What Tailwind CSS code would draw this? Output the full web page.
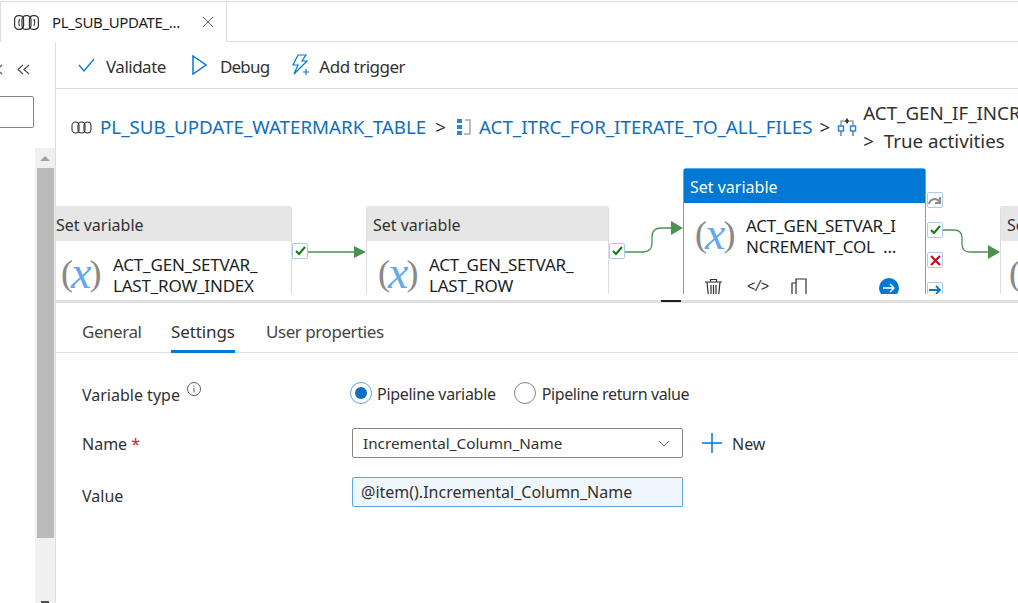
<!DOCTYPE html>
<html lang="en">
<head>
<meta charset="UTF-8">
<title>Pipeline editor</title>
<script src="https://cdn.jsdelivr.net/npm/@tailwindcss/browser@4"></script>
</head>
<body class="bg-white">
<div class="w-[1018px] h-[603px] overflow-hidden flex flex-col bg-white text-[#323130] font-['Noto_Sans',sans-serif]">

  <!-- tab strip -->
  <div class="h-[42px] shrink-0 flex pt-px">
    <div class="w-[227px] h-[41px] border-t border-l border-r border-[#ddd] flex items-center pl-[13px] text-[15px] text-[#201f1e]">
      <svg width="25" height="15" viewBox="0 0 25 15" fill="none" stroke="#323130" stroke-width="1.200"><rect x="0.600" y="0.600" width="9" height="13.800" rx="4"/><rect x="8" y="0.600" width="9" height="13.800" rx="4"/><rect x="15.400" y="0.600" width="9" height="13.800" rx="4"/><path d="M5.500 4q-1.500 3.500 0 7M20 4q1.500 3.500 0 7"/></svg>
      <span class="ml-[13px] w-[141px] whitespace-nowrap tracking-[-0.35px]">PL_SUB_UPDATE_...</span>
      <svg class="ml-[9px]" width="12" height="12" viewBox="0 0 12 12" stroke="#605e5c" stroke-width="1"><path d="M1 1l10 10M11 1L1 11"/></svg>
    </div>
    <div class="flex-1 border-t border-b border-[#ddd]"></div>
  </div>

  <div class="flex-1 flex min-h-0">
    <!-- collapsed factory panel -->
    <div class="w-[56px] shrink-0 border-r border-[#ddd] flex flex-col">
      <div class="h-[54px] pt-[22px] flex">
        <svg class="-ml-[4px]" width="8" height="11" viewBox="0 0 8 11" fill="none" stroke="#505050" stroke-width="1.200"><path d="M6 1L1 5.500 6 10"/></svg>
        <svg class="ml-[13px]" width="13" height="11" viewBox="0 0 13 11" fill="none" stroke="#505050" stroke-width="1.200"><path d="M6 1L1 5.500 6 10M12 1L7 5.500l5 4.500"/></svg>
      </div>
      <div class="w-[34px] h-[32px] border border-l-0 border-[#8a8a8a] rounded-r-[2px]"></div>
      <div class="mt-[20px] ml-[35px] w-[20px] flex-1 bg-[#f0f0f0] flex flex-col items-center">
        <div class="h-[20px] flex items-center"><div class="w-0 h-0 border-x-[5px] border-x-transparent border-b-[5px] border-b-[#a3a3a3]"></div></div>
        <div class="w-[17px] h-[370px] bg-[#bababa]"></div>
        <div class="flex-1"></div>
        <div class="w-[8px] h-[2px] bg-[#505050]"></div>
      </div>
    </div>

    <div class="flex-1 min-w-0 flex flex-col">
      <!-- command bar -->
      <div class="h-[47px] shrink-0 border-b border-[#ddd] flex items-center pl-[22px] text-[17px] leading-none tracking-[-0.5px]">
        <svg width="17" height="14" viewBox="0 0 17 14" fill="none" stroke="#0078d4" stroke-width="1.300"><path d="M1 7l5 6L16 1"/></svg>
        <span class="ml-[11px] pt-[3px]">Validate</span>
        <svg class="ml-[26px]" width="15" height="20" viewBox="0 0 15 20" fill="none" stroke="#0078d4" stroke-width="1.500"><path d="M1 1l13 9-13 9z"/></svg>
        <span class="ml-[13px] pt-[3px] tracking-[-0.8px]">Debug</span>
        <svg class="ml-[22px]" width="19" height="22" viewBox="0 0 19 22" fill="none" stroke="#0078d4" stroke-width="1.200"><path d="M7 1h8l-4 6h5L3 20l4-9H2z"/><path d="M15 15v6M12 18h6"/></svg>
        <span class="ml-[9px] pt-[3px]">Add trigger</span>
      </div>

      <!-- breadcrumb -->
      <div class="h-[76px] shrink-0 flex pl-[15px] pt-[12px] text-[18.75px] leading-[26px] whitespace-nowrap">
        <div class="h-[52px] flex items-center">
          <svg width="21" height="13" viewBox="0 0 21 13" fill="none" stroke="#323130" stroke-width="1.100"><rect x="1" y="1" width="7" height="11" rx="3.500"/><rect x="7" y="1" width="7" height="11" rx="3.500"/><rect x="13" y="1" width="7" height="11" rx="3.500"/></svg>
          <span class="ml-[8px] text-[#106ebe]">PL_SUB_UPDATE_WATERMARK_TABLE</span>
          <span class="ml-[9px]">&gt;</span>
          <svg class="ml-[10px]" width="15" height="18" viewBox="0 0 15 18" fill="none"><path d="M1 1h5v4H1zM1 7h5v4H1zM1 13h5v4H1z" fill="#2b88d8"/><path d="M9 2h5v14H8" stroke="#a6a6a6" stroke-width="1.500"/></svg>
          <span class="ml-[8px] text-[#106ebe]">ACT_ITRC_FOR_ITERATE_TO_ALL_FILES</span>
          <span class="ml-[7px]">&gt;</span>
          <svg class="ml-[7px]" width="20" height="20" viewBox="0 0 20 20" fill="none"><path d="M4 9V4h12v5" stroke="#7a7a7a" stroke-width="1.200"/><path d="M10 1l2 3-2 3-2-3z" fill="#323130"/><path d="M1.500 9h5v5h-5zM13.500 9h5v5h-5z" stroke="#2b88d8" stroke-width="1.500"/><path d="M4 14v5M16 14v5" stroke="#7a7a7a" stroke-width="1.500"/></svg>
        </div>
        <div class="ml-[6px] -mt-[1px]">
          <div>ACT_GEN_IF_INCREMENTAL</div>
          <div class="mt-[2px]">&gt; <span class="ml-[5px]">True activities</span></div>
        </div>
      </div>

      <!-- pipeline canvas -->
      <div class="relative h-[129px] shrink-0 overflow-hidden">
        <!-- node 1 -->
        <div class="absolute left-0 top-[41px] w-[236px] h-[120px] border-r border-[#ddd] rounded-tr-[3px]">
          <div class="h-[35px] pt-[2px] bg-[#e6e6e6] flex items-center text-[16px] leading-none">Set variable</div>
          <div class="flex pl-[5px] pt-[13px]">
            <div class="w-[52px] h-[38px] leading-[38px] whitespace-nowrap text-[#8a8886] font-['Liberation_Serif',serif]"><span class="text-[36px] align-[3px]">(</span><span class="italic text-[#62a8ec] text-[46px] -mx-[2px]">x</span><span class="text-[36px] align-[3px]">)</span></div>
            <div class="text-[17px] leading-[21px] text-[#201f1e] tracking-[-0.2px]">ACT_GEN_SETVAR_<br>LAST_ROW_INDEX</div>
          </div>
        </div>
        <!-- node 2 -->
        <div class="absolute left-[310px] top-[41px] w-[243px] h-[120px] border-x border-[#ddd] rounded-t-[3px]">
          <div class="h-[35px] pt-[2px] bg-[#e6e6e6] flex items-center pl-[6px] text-[16px] leading-none">Set variable</div>
          <div class="flex pl-[11px] pt-[13px]">
            <div class="w-[51px] h-[38px] leading-[38px] whitespace-nowrap text-[#8a8886] font-['Liberation_Serif',serif]"><span class="text-[36px] align-[3px]">(</span><span class="italic text-[#62a8ec] text-[46px] -mx-[2px]">x</span><span class="text-[36px] align-[3px]">)</span></div>
            <div class="text-[17px] leading-[21px] text-[#201f1e] tracking-[-0.2px]">ACT_GEN_SETVAR_<br>LAST_ROW</div>
          </div>
        </div>
        <!-- node 3, selected -->
        <div class="absolute left-[627px] top-[3px] w-[243px] h-[160px] border border-[#5aa9e6] rounded-t-[3px] bg-white">
          <div class="h-[34px] pt-px bg-[#0078d4] flex items-center pl-[6px] text-[16px] leading-none text-white">Set variable</div>
          <div class="flex pl-[11px] pt-[12px]">
            <div class="w-[51px] h-[38px] leading-[38px] whitespace-nowrap text-[#8a8886] font-['Liberation_Serif',serif]"><span class="text-[36px] align-[3px]">(</span><span class="italic text-[#62a8ec] text-[46px] -mx-[2px]">x</span><span class="text-[36px] align-[3px]">)</span></div>
            <div class="text-[17px] leading-[21px] text-[#201f1e] tracking-[-0.2px] whitespace-pre">ACT_GEN_SETVAR_I<br>NCREMENT_COL  ...</div>
          </div>
          <div class="flex items-start mt-[21px] pl-[20px]">
            <svg width="19" height="20" viewBox="0 0 19 20" fill="none" stroke="#323130" stroke-width="1.200"><path d="M1 4h17M6.500 4V1.500h6V4M3 4l1.500 15h10L16 4M7 7v10M9.500 7v10M12 7v10"/></svg>
            <span class="ml-[24px] w-[20px] mt-[2px] text-[14px] leading-none font-['Liberation_Mono',monospace] tracking-[-1.500px]">&lt;/&gt;</span>
            <svg class="ml-[23px]" width="17" height="20" viewBox="0 0 17 20" fill="none" stroke="#323130" stroke-width="1.200"><path d="M6 20V1h10v19M2 20V5h4"/></svg>
            <div class="ml-[72px] w-[20px] h-[20px] rounded-full bg-[#0078d4] flex items-center justify-center">
              <svg width="12" height="10" viewBox="0 0 12 10" fill="none" stroke="#fff" stroke-width="1.500"><path d="M0 5h11M7 1l4 4-4 4"/></svg>
            </div>
          </div>
        </div>
        <!-- node 4 -->
        <div class="absolute left-[944px] top-[41px] w-[120px] h-[120px] border-l border-[#ddd] rounded-tl-[3px]">
          <div class="h-[35px] pt-[2px] bg-[#e6e6e6] flex items-center pl-[6px] text-[16px] leading-none">Set variable</div>
          <div class="pl-[8px] pt-[13px] text-[36px] leading-[38px] text-[#8a8886] font-['Liberation_Serif',serif]">(</div>
        </div>

        <!-- connection badges -->
        <div class="absolute left-[236px] top-[78px] w-[16px] h-[16px] bg-white border border-[#a9cdef] rounded-[2px] flex items-center justify-center">
          <svg width="11" height="10" viewBox="0 0 11 10" fill="none" stroke="#107c10" stroke-width="2"><path d="M1 5l3 3 6-7"/></svg>
        </div>
        <div class="absolute left-[553px] top-[78px] w-[16px] h-[16px] bg-white border border-[#a9cdef] rounded-[2px] flex items-center justify-center">
          <svg width="11" height="10" viewBox="0 0 11 10" fill="none" stroke="#107c10" stroke-width="2"><path d="M1 5l3 3 6-7"/></svg>
        </div>
        <div class="absolute left-[871px] top-[27px] w-[16px] h-[16px] bg-white border border-[#a9cdef] rounded-[2px] flex items-center justify-center">
          <svg width="14" height="10" viewBox="0 0 14 10" fill="none" stroke="#8a8a8a" stroke-width="2"><path d="M1 9c1-5 7-7 11-2M12 2v6H7"/></svg>
        </div>
        <div class="absolute left-[871px] top-[57px] w-[16px] h-[16px] bg-white border border-[#a9cdef] rounded-[2px] flex items-center justify-center">
          <svg width="11" height="10" viewBox="0 0 11 10" fill="none" stroke="#107c10" stroke-width="2"><path d="M1 5l3 3 6-7"/></svg>
        </div>
        <div class="absolute left-[871px] top-[87px] w-[16px] h-[16px] bg-white border border-[#a9cdef] rounded-[2px] flex items-center justify-center">
          <svg width="11" height="11" viewBox="0 0 11 11" fill="none" stroke="#c50f1f" stroke-width="2.200"><path d="M1 1l9 9M10 1l-9 9"/></svg>
        </div>
        <div class="absolute left-[871px] top-[117px] w-[16px] h-[16px] bg-white border border-[#a9cdef] rounded-[2px] flex items-center justify-center">
          <svg width="12" height="10" viewBox="0 0 12 10" fill="none" stroke="#0078d4" stroke-width="1.800"><path d="M0 5h11M7 1l4 4-4 4"/></svg>
        </div>

        <!-- connectors -->
        <svg class="absolute left-0 top-0" width="962" height="129" fill="none">
          <path d="M252 87H298" stroke="#4c9150" stroke-width="1.300"/>
          <path d="M298 81l12 6-12 6z" fill="#4c9150"/>
          <path d="M569 87H587q9 0 9-9V72q0-9 9-9h11" stroke="#4c9150" stroke-width="1.300"/>
          <path d="M615 56l12 7-12 7z" fill="#4c9150"/>
          <path d="M887 65h11q8 0 8 8v6q0 8 8 8h20" stroke="#4c9150" stroke-width="1.300"/>
          <path d="M932 80l12 7-12 7z" fill="#4c9150"/>
        </svg>
      </div>

      <div class="h-[6px] shrink-0"></div>
      <!-- splitter -->
      <div class="h-[3px] shrink-0 bg-[#e1e1e1] flex pl-[605px]"><div class="w-[20px] h-[2px] bg-[#201f1e]"></div></div>

      <!-- bottom tabs -->
      <div class="h-[50px] shrink-0 border-b border-[#e1dfdd] flex pl-[26px] text-[17px] tracking-[-0.45px]">
        <div class="pt-[16px] w-[60px] whitespace-nowrap text-[#484644]">General</div>
        <div class="ml-[29px] pt-[16px] w-[64px] h-[50px] whitespace-nowrap border-b-[3px] border-[#0078d4] tracking-[-0.1px]">Settings</div>
        <div class="ml-[31px] pt-[16px] text-[#484644]">User properties</div>
      </div>

      <!-- settings form -->
      <div class="pl-[26px] text-[16px]">
        <div class="flex items-center h-[28px] mt-[26px]">
          <div class="w-[268px] flex pt-[3px]">
            <span>Variable type</span>
            <svg class="ml-[7px] mt-[-1px]" width="14" height="14" viewBox="0 0 14 14" fill="none" stroke="#605e5c" stroke-width="1"><circle cx="7" cy="7" r="6.500"/><path d="M7 6v4.500M7 3.500v1"/></svg>
          </div>
          <div class="w-[22px] h-[22px] rounded-full border-[1.500px] border-[#5aa9e6] flex items-center justify-center"><div class="w-[12px] h-[12px] rounded-full bg-[#106ebe]"></div></div>
          <span class="ml-[5px] pt-px tracking-[-0.3px]">Pipeline variable</span>
          <div class="ml-[18px] w-[22px] h-[22px] rounded-full border border-[#8a8886]"></div>
          <span class="ml-[6px] pt-px tracking-[-0.4px]">Pipeline return value</span>
        </div>
        <div class="flex items-center h-[30px] mt-[21px]">
          <div class="w-[270px] pt-[2px]">Name <span class="text-[#c4262e]">*</span></div>
          <div class="w-[331px] h-[30px] border border-[#8a8886] rounded-[2px] flex items-center justify-between pl-[10px] pr-[12px] text-[15.25px]">
            <span class="pt-px">Incremental_Column_Name</span>
            <svg width="12" height="7" viewBox="0 0 12 7" fill="none" stroke="#605e5c" stroke-width="1"><path d="M1 1l5 5 5-5"/></svg>
          </div>
          <svg class="ml-[19px]" width="20" height="20" viewBox="0 0 20 20" fill="none" stroke="#0078d4" stroke-width="1.500"><path d="M10 0v20M0 10h20"/></svg>
          <span class="ml-[10px] pt-px">New</span>
        </div>
        <div class="flex items-center h-[30px] mt-[19px]">
          <div class="w-[270px] pt-[7px]">Value</div>
          <div class="w-[331px] h-[30px] border border-[#5aa9e6] bg-[#eff6fc] rounded-[2px] flex items-center pl-[8px] text-[16px]">@item().Incremental_Column_Name</div>
        </div>
      </div>
    </div>
  </div>
</div>
</body>
</html>
